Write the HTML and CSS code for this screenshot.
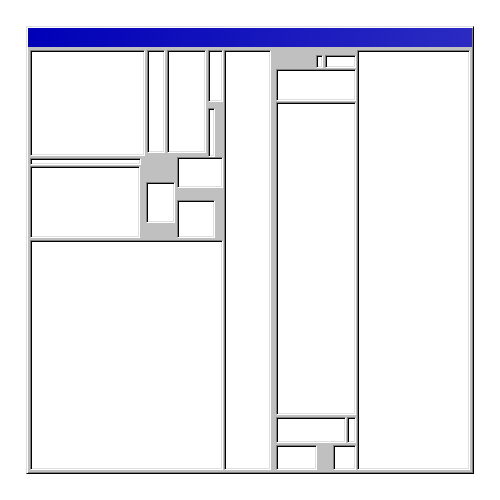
FILE: index.html
```html
<!DOCTYPE html>
<html>
<head>
<meta charset="utf-8">
<link rel="stylesheet" href="styles.css">
</head>
<body>
<div class="win">
  <div class="title"></div>
  <div class="body">
    <div class="col-l">
      <div class="top-l">
        <div class="l1">
          <div class="p a"></div>
          <div class="p b"></div>
          <div class="p c"></div>
        </div>
        <div class="l2">
          <div class="l2-top">
            <div class="p s1"></div>
            <div class="p s2"></div>
            <div class="s3">
              <div class="p s3a"></div>
              <div class="p s3b"></div>
            </div>
          </div>
          <div class="l2-bot">
            <div class="p box1"></div>
            <div class="box-col">
              <div class="p box2"></div>
              <div class="p box3"></div>
            </div>
          </div>
        </div>
      </div>
      <div class="p bl"></div>
    </div>
    <div class="p tall"></div>
    <div class="col-m">
      <div class="m-top">
        <div class="p sb1"></div>
        <div class="p sb2"></div>
      </div>
      <div class="p m1"></div>
      <div class="p m2"></div>
      <div class="m3">
        <div class="p m3a"></div>
        <div class="p m3b"></div>
      </div>
      <div class="m4">
        <div class="p m4a"></div>
        <div class="p m4b"></div>
      </div>
    </div>
    <div class="p right"></div>
  </div>
</div>
</body>
</html>
```
FILE: styles.css
```css
html, body { margin: 0; padding: 0; background: #fff; }
body { padding: 26px; }
* { box-sizing: border-box; }

.win {
  width: 448px;
  height: 448px;
  background: #c0c0c0;
  border: 1px solid;
  border-color: #dfdfdf #000 #000 #dfdfdf;
  box-shadow: inset 1px 1px #fff, inset -1px -1px #808080;
  padding: 1px;
}
.title {
  height: 19px;
  background: linear-gradient(90deg, #0000b8, #2b2bc2);
}
.body {
  display: flex;
  margin-top: 3px;
  padding: 0 2px;
  height: 420px;
}
.p {
  background: #fff;
  border: 1px solid;
  border-color: #808080 #fff #fff #808080;
  box-shadow: inset 1px 1px #000, inset -1px -1px #dfdfdf;
  flex: none;
}

.col-l { width: 193px; display: flex; flex-direction: column; flex: none; }
.top-l { height: 188px; display: flex; }
.bl { margin-top: 2px; width: 193px; height: 230px; }

.l1 { width: 115px; display: flex; flex-direction: column; flex: none; }
.a { width: 115px; height: 106px; }
.b { width: 111px; height: 7px; margin-top: 2px; }
.c { width: 110px; height: 72px; margin-top: 1px; }

.l2 { margin-left: 1px; width: 77px; display: flex; flex-direction: column; flex: none; }
.l2-top { height: 107px; display: flex; align-items: flex-start; }
.s1 { margin-left: 1px; width: 18px; height: 103px; }
.s2 { margin-left: 2px; width: 39px; height: 103px; }
.s3 { margin-left: 2px; display: flex; flex-direction: column; }
.s3a { width: 15px; height: 52px; }
.s3b { margin-top: 6px; width: 7px; height: 49px; }
.l2-bot { height: 81px; display: flex; align-items: flex-start; }
.box1 { margin-top: 25px; width: 29px; height: 41px; }
.box-col { margin-left: 2px; display: flex; flex-direction: column; }
.box2 { width: 46px; height: 31px; }
.box3 { margin-top: 12px; width: 38px; height: 38px; }

.tall { margin-left: 1px; width: 47px; height: 420px; }

.col-m { width: 85px; padding-left: 5px; display: flex; flex-direction: column; flex: none; }
.m-top { height: 19px; padding-top: 5px; display: flex; justify-content: flex-end; align-items: flex-start; }
.sb1 { width: 7px; height: 13px; }
.sb2 { margin-left: 2px; width: 31px; height: 13px; }
.m1 { height: 32px; }
.m2 { margin-top: 1px; height: 313px; }
.m3 { margin-top: 2px; height: 26px; display: flex; }
.m3a { width: 70px; height: 26px; }
.m3b { margin-left: 1px; width: 9px; height: 26px; }
.m4 { margin-top: 2px; height: 25px; display: flex; justify-content: space-between; }
.m4a { width: 41px; height: 25px; }
.m4b { width: 23px; height: 25px; }

.right { margin-left: 1px; width: 113px; height: 420px; }
```
